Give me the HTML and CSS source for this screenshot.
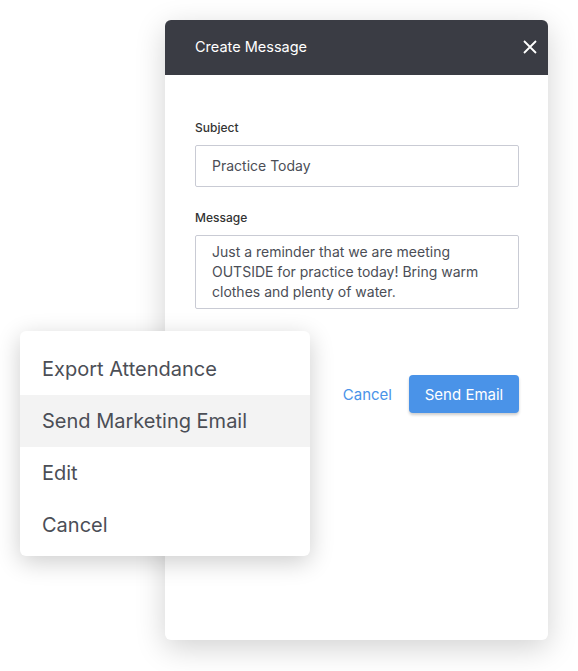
FILE: index.html
```html
<!DOCTYPE html>
<html>
<head>
    <meta charset="UTF-8">
    <title>Create Message</title>
    <link rel="stylesheet" href="styles.css">
</head>
<body>
    <div class="stage">
        <div class="modal">
            <div class="modal-header">
                <span class="modal-title">Create Message</span>
                <svg class="close" width="14" height="14" viewBox="0 0 14 14">
                    <path d="M1 1 L13 13 M13 1 L1 13" stroke="#fff" stroke-width="1.8" fill="none"/>
                </svg>
            </div>
            <div class="modal-body">
                <label class="field-label">Subject</label>
                <div class="input">Practice Today</div>

                <label class="field-label">Message</label>
                <div class="input textarea">Just a reminder that we are meeting OUTSIDE for practice today! Bring warm clothes and plenty of water.</div>

                <div class="actions">
                    <a class="link-btn">Cancel</a>
                    <button class="primary-btn">Send Email</button>
                </div>
            </div>
        </div>

        <ul class="menu">
            <li>Export Attendance</li>
            <li class="active">Send Marketing Email</li>
            <li>Edit</li>
            <li>Cancel</li>
        </ul>
    </div>
</body>
</html>
```

FILE: styles.css
```css
:root {
    --dark-color: #3a3c44;
    --text-color: #4b4e56;
    --blue-color: #4a93e8;
    --border-color: #c9cbd4;
}

body {
    margin: 0;
    background-color: #fff;
    font-family: Inter, Roboto, sans-serif;
}

.stage {
    position: relative;
    width: 578px;
    height: 671px;
}

.modal {
    position: absolute;
    left: 165px;
    top: 20px;
    width: 383px;
    height: 620px;
    background-color: #fff;
    border-radius: 6px;
    box-shadow: 0 8px 30px rgba(0, 0, 0, 0.18);
    overflow: hidden;
}

.modal-header {
    height: 55px;
    background-color: var(--dark-color);
    display: flex;
    align-items: center;
    justify-content: space-between;
    padding: 0 11px 0 30px;
}

.modal-title {
    color: #fff;
    font-size: 14.5px;
    margin-top: -2px;
}

.close {
    margin-top: -2px;
}

.modal-body {
    padding: 45px 29px 0 30px;
}

.field-label {
    display: block;
    font-size: 12px;
    font-weight: 500;
    color: #333;
    margin-bottom: 10px;
}

.input {
    border: 1px solid var(--border-color);
    border-radius: 2px;
    padding: 11px 16px;
    font-size: 14px;
    line-height: 18px;
    color: var(--text-color);
    margin-bottom: 23px;
}

.textarea {
    padding: 6px 16px;
    line-height: 20px;
    margin-bottom: 0;
}

.actions {
    display: flex;
    justify-content: flex-end;
    align-items: center;
    gap: 17px;
    margin-top: 66px;
}

.link-btn {
    color: var(--blue-color);
    font-size: 15px;
}

.primary-btn {
    background-color: var(--blue-color);
    color: #fff;
    border: none;
    border-radius: 4px;
    font-family: inherit;
    font-size: 15px;
    width: 110px;
    height: 38px;
    box-shadow: 0 2px 3px rgba(0, 0, 0, 0.2);
}

.menu {
    position: absolute;
    left: 20px;
    top: 331px;
    width: 290px;
    margin: 0;
    padding: 12px 0 5px;
    list-style: none;
    background-color: #fff;
    border-radius: 6px;
    box-shadow: 0 6px 24px rgba(0, 0, 0, 0.2);
}

.menu li {
    height: 52px;
    line-height: 52px;
    padding-left: 22px;
    font-size: 20px;
    color: var(--text-color);
}

.menu li.active {
    background-color: #f3f3f3;
}
```
